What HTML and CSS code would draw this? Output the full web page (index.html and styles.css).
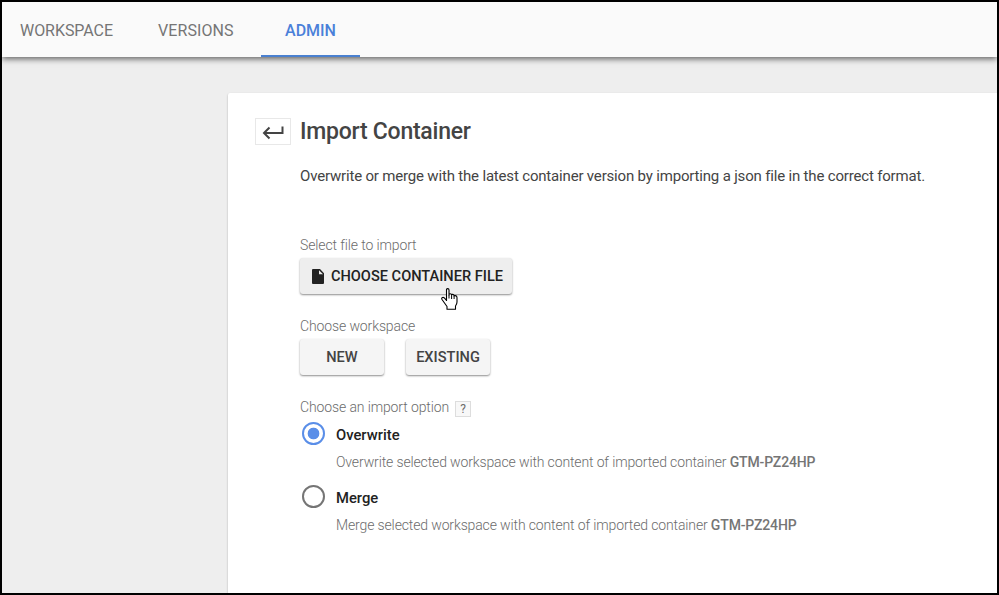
FILE: index.html
```html
<!DOCTYPE html>
<html lang="en">
<head>
  <meta charset="UTF-8">
  <meta name="viewport" content="width=device-width, initial-scale=1.0">
  <title>Import Container</title>
  <link rel="stylesheet" href="styles.css">
</head>
<body>
  <nav class="tabs">
    <a class="tab workspace">WORKSPACE</a>
    <a class="tab versions">VERSIONS</a>
    <a class="tab active">ADMIN</a>
  </nav>
  <main class="page">
    <section class="panel">
      <header class="panel-header">
        <button class="back" aria-label="Back">
          <svg width="24" height="16" viewBox="0 0 24 16" fill="none" stroke="#444" stroke-width="2">
            <path d="M21.5 2.5V9H3M8.5 3.5L3 9L8.5 14.5"/>
          </svg>
        </button>
        <h1>Import Container</h1>
      </header>
      <div class="content">
        <p class="intro"><span>Overwrite or merge with the latest container version by importing a json file in the correct format.</span></p>

        <p class="label"><span>Select file to import</span></p>
        <div class="buttons">
          <button class="btn btn-file">
            <svg width="12" height="15" viewBox="0 0 12 15">
              <path fill="#222" fill-rule="evenodd" d="M1 0H8L12 4.2V14Q12 15 11 15H1Q0 15 0 14V1Q0 0 1 0ZM7 1.2V5.2H11Z"/>
            </svg>
            <span>CHOOSE CONTAINER FILE</span>
          </button>
          <svg class="cursor" width="17" height="22" viewBox="0 0 17 22">
            <path fill="#fff" stroke="#000" stroke-width="1.1" stroke-linejoin="round" d="M5.5 13V2Q5.5 .6 6.7 .6Q8 .6 8 2V7Q8 5.7 9.2 5.8Q10.6 5.9 10.6 7.3Q10.7 6.3 11.8 6.4Q13.1 6.6 13.1 8Q13.3 7.4 14.4 7.6Q16 8 16 9.5V14Q16 16 14.5 18V21.2H6V18.5L3.5 15L1 11.5Q.2 10 1.5 9.5Q3 9.1 4.2 10.9L5.5 12.5"/>
            <path fill="none" stroke="#000" d="M8 7V10.5M10.6 7.3V11M13.1 8V11"/>
          </svg>
        </div>

        <p class="label"><span>Choose workspace</span></p>
        <div class="buttons">
          <button class="btn"><span>NEW</span></button>
          <button class="btn"><span>EXISTING</span></button>
        </div>

        <p class="label"><span>Choose an import option</span> <span class="help">?</span></p>
        <div class="option">
          <span class="radio checked"></span>
          <div>
            <h2><span>Overwrite</span></h2>
            <p class="hint"><span>Overwrite selected workspace with content of imported container <strong>GTM-PZ24HP</strong></span></p>
          </div>
        </div>
        <div class="option">
          <span class="radio"></span>
          <div>
            <h2><span>Merge</span></h2>
            <p class="hint"><span>Merge selected workspace with content of imported container <strong>GTM-PZ24HP</strong></span></p>
          </div>
        </div>
      </div>
    </section>
  </main>
</body>
</html>
```
FILE: styles.css
```css
* {
  box-sizing: border-box;
}

body {
  margin: 0;
  height: 100vh;
  border: 2px solid #000;
  display: flex;
  flex-direction: column;
  overflow: hidden;
  background: #eee;
  color: #444;
  font-family: Roboto, Arial, sans-serif;
}

h1, h2, p {
  margin: 0;
}

/* Top tabs */
.tabs {
  display: flex;
  flex: none;
  height: 55px;
  background: #fafafa;
  box-shadow: 0 2px 6px rgba(0, 0, 0, 0.6);
  z-index: 1;
}

.tab {
  color: #757575;
  font-size: 16px;
  line-height: 57px;
}

.workspace {
  padding-left: 18px;
  width: 156px;
  letter-spacing: -0.05px;
}

.versions {
  width: 103px;
  letter-spacing: 0.1px;
}

.active {
  width: 99px;
  border-bottom: 2px solid #4a80d0;
  color: #4a80d9;
  font-weight: 500;
  text-align: center;
}

/* Panel */
.page {
  flex: 1;
  display: flex;
  padding: 36px 0 0 226px;
}

.panel {
  flex: 1;
  padding: 25px 0 0 27px;
  background: #fff;
  border-top-left-radius: 2px;
  box-shadow: 0 1px 2px rgba(0, 0, 0, 0.3);
}

.panel-header {
  display: flex;
  gap: 9px;
}

.back {
  display: flex;
  align-items: center;
  justify-content: center;
  width: 36px;
  height: 27px;
  padding: 0 1px 0 0;
  border: 1px solid #e8e8e8;
  background: #fff;
}

h1 {
  font-size: 23px;
  line-height: 27px;
  font-weight: 500;
  letter-spacing: -0.25px;
}

.content {
  padding-left: 44px;
}

.intro {
  height: 88px;
  padding: 21px 1px 0;
  font-size: 15px;
  line-height: 20px;
  letter-spacing: -0.178px;
}

.label {
  display: flex;
  align-items: center;
  height: 24px;
  padding-left: 1px;
  color: #6c6c6c;
  font-size: 14px;
  font-weight: 300;
  letter-spacing: -0.12px;
}

.help {
  width: 16px;
  height: 16px;
  margin: 4px 0 0 6px;
  border: 1px solid #ddd;
  background: #f8f8f8;
  font-size: 12px;
  font-weight: 400;
  line-height: 15px;
  text-align: center;
}

/* Buttons */
.buttons {
  position: relative;
  display: flex;
  gap: 22px;
  height: 57px;
  padding: 1px 0 0 1px;
}

.btn {
  display: flex;
  align-items: center;
  justify-content: center;
  width: 84px;
  height: 36px;
  padding: 0;
  border: none;
  border-radius: 3px;
  background: #f5f5f5;
  box-shadow: 0 1px 2px rgba(0, 0, 0, 0.45);
  color: #444;
  font: 500 14.6px Roboto, Arial, sans-serif;
}

.btn-file {
  gap: 7px;
  width: 212px;
  padding-left: 3px;
  background: #eee;
  color: #222;
}

/* Pointer over the file button */
.cursor {
  position: absolute;
  left: 142px;
  top: 31px;
}

/* Radio options */
.option {
  display: flex;
  height: 63px;
  padding: 3px 0 0 3px;
}

.radio {
  width: 23px;
  height: 23px;
  margin-right: 11px;
  border: 2px solid #757575;
  border-radius: 50%;
}

.checked {
  border-color: #5a8ee8;
  background: radial-gradient(circle, #5a8ee8 5.5px, transparent 6.2px);
}

h2 {
  color: #222;
  font-size: 14.8px;
  line-height: 26px;
  font-weight: 500;
}

.hint {
  color: #6c6c6c;
  font-size: 14px;
  line-height: 28px;
  font-weight: 300;
  letter-spacing: -0.135px;
}

.hint strong {
  color: #757575;
  font-weight: 500;
}
```
